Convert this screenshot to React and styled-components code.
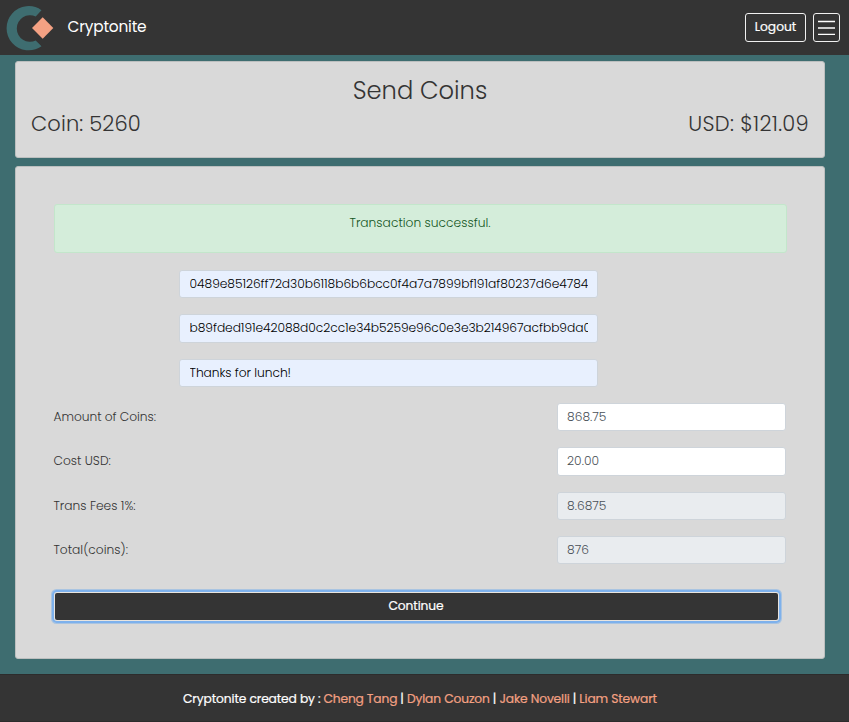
import React from "react";
import styled, { createGlobalStyle } from "styled-components";

const GlobalStyle = createGlobalStyle`
  *, *::before, *::after { box-sizing: border-box; }
  body {
    margin: 0;
    background: #3e6d70;
    color: #343434;
    font-family: Poppins, Inter, "Open Sans", sans-serif;
    font-size: 12.25px;
    font-weight: 300;
    line-height: 20px;
    overflow: hidden;
  }
`;

const Page = styled.div`
  height: 722px;
  display: flex;
  flex-direction: column;
`;

const Header = styled.header`
  height: 55px;
  flex: none;
  display: flex;
  align-items: center;
  padding: 0 9px 0 6px;
  background: #343434;
`;

const Brand = styled.div`
  margin-left: 13.5px;
  flex: 1;
  color: #fff;
  font-size: 15.4px;
  font-weight: 400;
  line-height: 24px;
  letter-spacing: -0.2px;
  padding-bottom: 1px;
`;

const HeaderButton = styled.button`
  height: 29px;
  width: ${(p) => p.$width}px;
  margin-left: ${(p) => p.$gap || 0}px;
  display: flex;
  align-items: center;
  justify-content: center;
  padding: 0 0 1px;
  border: 1px solid #f0f0f0;
  border-radius: 3px;
  background: transparent;
  color: #fff;
  font: 400 12.25px/20px Poppins, Inter, sans-serif;
  -webkit-text-stroke: 0.2px currentColor;
`;

const Main = styled.main`
  flex: 1;
  display: flex;
  flex-direction: column;
  gap: 8px;
  padding: 6px 24px 15px 15px;
`;

const Card = styled.section`
  height: ${(p) => p.$height}px;
  padding: ${(p) => p.$padding};
  background: #d9d9d9;
  border: 1px solid #bcbfbf;
  border-radius: 3px;
`;

const Title = styled.h1`
  margin: 0;
  text-align: center;
  font-size: 24.2px;
  font-weight: 300;
  line-height: 30px;
`;

const Balances = styled.div`
  display: flex;
  justify-content: space-between;
  margin-top: 4px;
  font-size: 21px;
  line-height: 28px;
`;

const Text = styled.span`
  letter-spacing: ${(p) => p.$track || 0}px;
  white-space: nowrap;
`;

const Alert = styled.div`
  height: 49px;
  width: 733px;
  padding-top: 8px;
  background: #d4edda;
  border: 1px solid #c3e6cb;
  border-radius: 3px;
  color: #155724;
  text-align: center;
`;

const Field = styled.input`
  display: block;
  width: ${(p) => p.$width}px;
  height: 28.4px;
  padding: 3.5px 9px 3.9px ${(p) => p.$inset || 9}px;
  border: 1px solid #ced4da;
  border-radius: 3px;
  outline: 0;
  background: ${(p) => p.$bg || "#fff"};
  color: ${(p) => p.$color || "#495057"};
  font: 300 12.25px/19px Poppins, Inter, sans-serif;
  letter-spacing: ${(p) => p.$track || 0}px;
`;

const Recipients = styled.div`
  display: grid;
  grid-auto-rows: 44.4px;
  margin: 17px 0 0 125.4px;
`;

const Amounts = styled.div`
  display: grid;
  grid-auto-rows: 44.3px;
`;

const AmountRow = styled.label`
  display: flex;
  justify-content: space-between;
  width: 732.2px;
  height: 28px;
  align-items: center;
`;

const Continue = styled.button`
  display: block;
  width: 723px;
  height: 27px;
  margin: 13px 0 0 1px;
  padding: 0 0 1px;
  border: 0;
  border-radius: 2px;
  background: #343434;
  box-shadow: 0 0 0 1px #e8e4df, 0 0 0 3px #7eb1ec, 0 0 0 4px #a9c4e1;
  outline: 0;
  color: #fff;
  font: 400 12.25px/20px Poppins, Inter, sans-serif;
  letter-spacing: -0.1px;
  -webkit-text-stroke: 0.2px currentColor;
`;

const Footer = styled.footer`
  height: 48px;
  flex: none;
  display: flex;
  justify-content: center;
  align-items: center;
  gap: 3px;
  padding: 1px 9px 0 0;
  border-top: 1px solid #2c2c2c;
  border-bottom: 1px solid #2c2c2c;
  background: #343434;
  color: #fff;
  font-weight: 400;
  -webkit-text-stroke: 0.2px currentColor;
`;

const Author = styled.a`
  color: #f4a183;
  letter-spacing: ${(p) => p.$track || 0}px;
  white-space: nowrap;
`;

const recipients = [
  { value: "0489e85126ff72d30b6118b6b6bcc0f4a7a7899bf191af80237d6e4784", track: -0.05 },
  { value: "b89fded191e42088d0c2cc1e34b5259e96c0e3e3b214967acfbb9da0c", track: -0.06 },
  { value: "Thanks for lunch!", track: -0.05 },
];

const amounts = [
  { label: "Amount of Coins:", value: "868.75", track: -0.05 },
  { label: "Cost USD:", value: "20.00" },
  { label: "Trans Fees 1%:", value: "8.6875", locked: true },
  { label: "Total(coins):", value: "876", locked: true },
];

const authors = [
  { name: "Cheng Tang", track: -0.15 },
  { name: "Dylan Couzon", track: -0.12 },
  { name: "Jake Novelli", track: -0.13 },
  { name: "Liam Stewart", track: -0.12 },
];

const Logo = () => (
  <svg width="48" height="50" viewBox="0 0 48 50" aria-hidden="true">
    <path
      d="M35.5 7.2A22.1 22.1 0 1 0 35.5 43.2L29.7 37.4A13.2 13.2 0 1 1 29.7 13.6Z"
      fill="#3e6d70"
    />
    <path d="M36.7 14.3L47.3 25L36.7 35.7L26 25Z" fill="#f4a183" />
  </svg>
);

export default function App() {
  return (
    <Page>
      <GlobalStyle />
      <Header>
        <Logo />
        <Brand>Cryptonite</Brand>
        <HeaderButton $width={61}>Logout</HeaderButton>
        <HeaderButton $width={27} $gap={7} aria-label="Menu">
          <svg width="17" height="17" viewBox="0 0 17 17" stroke="#fff" strokeWidth="1.3">
            <path d="M0 2.5H17M0 9H17M0 15.3H17" />
          </svg>
        </HeaderButton>
      </Header>
      <Main>
        <Card $height={97} $padding="14px 15px">
          <Title>Send Coins</Title>
          <Balances>
            <Text $track={0.14}>Coin: 5260</Text>
            <Text $track={0.3}>USD: $121.09</Text>
          </Balances>
        </Card>
        <Card $height={493} $padding="37px 37.5px">
          <Alert>
            <Text>Transaction successful.</Text>
          </Alert>
          <Recipients>
            {recipients.map((r) => (
              <Field
                key={r.value}
                $width={419}
                $inset={9.7}
                $bg="#e8f0fe"
                $color="#000"
                $track={r.track}
                defaultValue={r.value}
              />
            ))}
          </Recipients>
          <Amounts>
            {amounts.map((a) => (
              <AmountRow key={a.label}>
                <Text $track={a.track}>{a.label}</Text>
                <Field $width={228.6} $bg={a.locked ? "#e9ecef" : "#fff"} readOnly={a.locked} defaultValue={a.value} />
              </AmountRow>
            ))}
          </Amounts>
          <Continue>Continue</Continue>
        </Card>
      </Main>
      <Footer>
        <Text $track={-0.12}>Cryptonite created by :</Text>
        {authors.map((a, i) => (
          <React.Fragment key={a.name}>
            {i > 0 && <span>|</span>}
            <Author $track={a.track}>{a.name}</Author>
          </React.Fragment>
        ))}
      </Footer>
    </Page>
  );
}
